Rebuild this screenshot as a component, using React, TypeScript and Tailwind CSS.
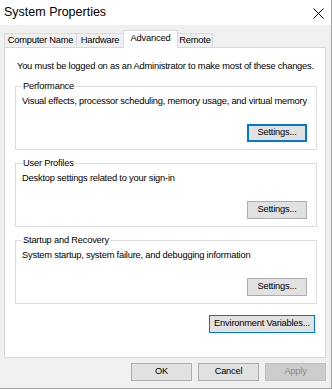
import React from 'react';

type BtnProps = { label: string; width: string; tone?: 'normal' | 'default' | 'focused' | 'disabled' };

function Button({ label, width, tone = 'normal' }: BtnProps) {
  const styles = {
    normal: 'bg-[#e1e1e1] border-[#adadad] text-black',
    default: 'bg-[#e1e1e1] border-[#0078d7] text-black',
    focused: 'bg-[#e1e1e1] border-[#0078d7] shadow-[inset_0_0_0_1px_#0078d7] text-black',
    disabled: 'bg-[#cccccc] border-[#bfbfbf] text-[#8a8a8a]',
  };
  return (
    <button className={`h-[18px] ${width} border ${styles[tone]} flex items-center justify-center leading-none`}>
      {label}
    </button>
  );
}

type GroupProps = { title: string; text: string; focused?: boolean };

function GroupBox({ title, text, focused }: GroupProps) {
  return (
    <div className="relative ml-[10px] w-[302px] h-[64px] border border-[#dcdcdc] flex flex-col pl-[6px] pr-[9px] pt-[8px] pb-[7px]">
      <span className="absolute -top-[7px] left-[6px] bg-white px-[1px] leading-[13px]">{title}</span>
      <div className="leading-[13px] whitespace-nowrap">{text}</div>
      <div className="mt-auto flex justify-end">
        <Button label="Settings..." width="w-[60px]" tone={focused ? 'focused' : 'normal'} />
      </div>
    </div>
  );
}

export default function App() {
  const tabs = [
    { label: 'Computer Name', cls: 'w-[73px] border-l border-t border-r' },
    { label: 'Hardware', cls: 'w-[47px] border-t border-r' },
  ];

  return (
    <div className="w-[332px] h-[389px] bg-[#f0f0f0] flex flex-col border-r border-b border-[#a0a0a0] font-['Liberation_Sans',Arial,sans-serif] text-[9.3px] tracking-[-0.2px] text-black">
      {/* title bar */}
      <div className="h-[25px] bg-white flex items-center justify-between pl-[4px] pr-[7px]">
        <span className="text-[12.5px] tracking-normal">System Properties</span>
        <svg width="11" height="11" viewBox="0 0 11 11" className="mt-[1px]">
          <path d="M0.5 0.5 L10.5 10.5 M10.5 0.5 L0.5 10.5" stroke="#000" strokeWidth="1" />
        </svg>
      </div>

      {/* tabs */}
      <div className="h-[22px] pl-[4px] flex items-end">
        {tabs.map(t => (
          <div key={t.label} className={`h-[14px] ${t.cls} border-[#d9d9d9] bg-[#f0f0f0] flex items-center justify-center leading-none`}>
            {t.label}
          </div>
        ))}
        <div className="relative z-10 -ml-px -mb-px h-[18px] w-[55px] border-l border-t border-r border-[#d9d9d9] bg-white flex items-center justify-center leading-none pb-[2px]">
          Advanced
        </div>
        <div className="h-[14px] w-[35px] border-t border-r border-[#d9d9d9] bg-[#f0f0f0] flex items-center justify-center leading-none">
          Remote
        </div>
      </div>

      {/* tab page */}
      <div className="ml-[4px] w-[322px] h-[311px] bg-white border border-[#d9d9d9] flex flex-col">
        <div className="pt-[12px] pl-[12px] leading-[13px] whitespace-nowrap">
          You must be logged on as an Administrator to make most of these changes.
        </div>
        <div className="mt-[13px] flex flex-col gap-[13px]">
          <GroupBox title="Performance" text="Visual effects, processor scheduling, memory usage, and virtual memory" focused />
          <GroupBox title="User Profiles" text="Desktop settings related to your sign-in" />
          <GroupBox title="Startup and Recovery" text="System startup, system failure, and debugging information" />
        </div>
        <div className="mt-[11px] pr-[10px] flex justify-end">
          <Button label="Environment Variables..." width="w-[106px]" tone="default" />
        </div>
      </div>

      {/* dialog buttons */}
      <div className="mt-[5px] pr-[5px] flex justify-end gap-[6px]">
        <Button label="OK" width="w-[61px]" />
        <Button label="Cancel" width="w-[61px]" />
        <Button label="Apply" width="w-[61px]" tone="disabled" />
      </div>
    </div>
  );
}
